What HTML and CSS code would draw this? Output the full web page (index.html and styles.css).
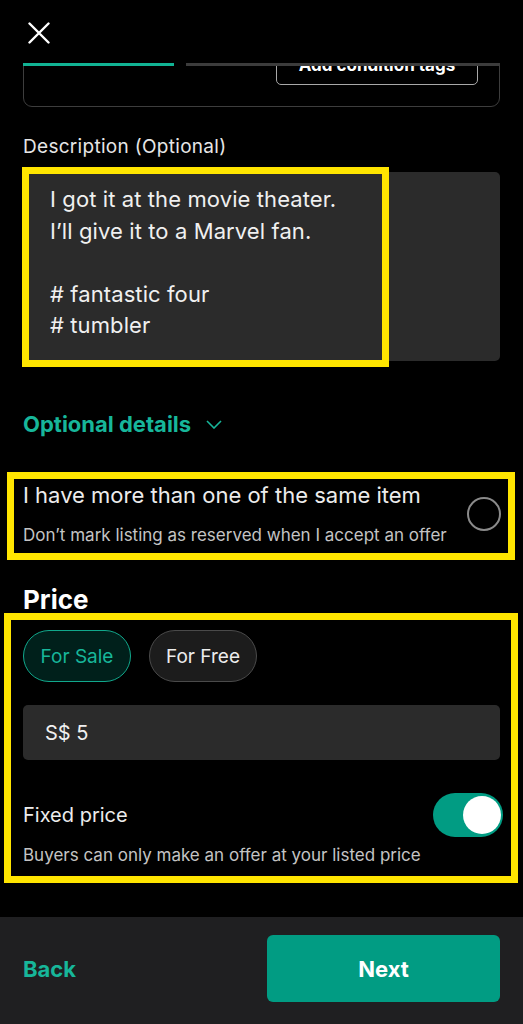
FILE: index.html
```html
<!DOCTYPE html>
<html lang="en">
    <head>
        <title>List an item - Price</title>
        <meta charset="utf-8" />
        <meta name="viewport" content="width=device-width, initial-scale=1">
        <link rel="stylesheet" href="styles.css">
    </head>

    <body>
        <div id="screen">
            <header class="topbar">
                <button class="close-btn" aria-label="Close">
                    <svg width="22" height="22" viewBox="0 0 22 22">
                        <path d="M1.5 1.5 L20.5 20.5 M20.5 1.5 L1.5 20.5" stroke="#ffffff" stroke-width="2.4" stroke-linecap="round" fill="none"/>
                    </svg>
                </button>
            </header>

            <div class="progress">
                <span class="step done"></span>
                <span class="step"></span>
            </div>

            <main class="content">
                <!-- condition card, scrolled mostly out of view -->
                <div class="condition-card">
                    <button class="outline-btn">Add condition tags</button>
                </div>

                <label class="field-label">Description (Optional)</label>
                <div class="textarea">
                    <p>I got it at the movie theater.<br>I’ll give it to a Marvel fan.<br><br># fantastic four<br># tumbler</p>
                    <div class="mark mark-desc"></div>
                </div>

                <div class="optional">
                    <span>Optional details</span>
                    <svg width="16" height="9" viewBox="0 0 16 9">
                        <path d="M1 1 L8 8 L15 1" stroke="#17b69a" stroke-width="1.6" fill="none"/>
                    </svg>
                </div>

                <div class="same-item marked-row">
                    <div class="same-text">
                        <div class="row-title">I have more than one of the same item</div>
                        <div class="row-sub">Don’t mark listing as reserved when I accept an offer</div>
                    </div>
                    <span class="radio"></span>
                </div>

                <h2 class="section-title">Price</h2>

                <div class="price-section marked-box">
                    <div class="pills">
                        <button class="pill active">For Sale</button>
                        <button class="pill">For Free</button>
                    </div>

                    <div class="price-input">S$ 5</div>

                    <div class="fixed-row">
                        <span class="row-title fixed-title">Fixed price</span>
                        <span class="toggle"><span class="knob"></span></span>
                    </div>
                    <div class="row-sub fixed-sub">Buyers can only make an offer at your listed price</div>
                </div>
            </main>

            <footer class="bottombar">
                <button class="back-btn">Back</button>
                <button class="next-btn">Next</button>
            </footer>
        </div>
    </body>
</html>
```

FILE: styles.css
```css
* {
    box-sizing: border-box;
}

html, body {
    margin: 0;
    padding: 0;
    background: #000000;
}

body {
    font-family: "Inter", "Noto Sans", sans-serif;
    color: #ececec;
}

button {
    font-family: inherit;
    cursor: pointer;
}

#screen {
    width: 523px;
    height: 1024px;
    display: flex;
    flex-direction: column;
    overflow: hidden;
}

.topbar {
    height: 63px;
    flex: none;
    padding: 22px 0 0 28px;
    position: relative;
    z-index: 2;
    background: #000000;
}

.close-btn {
    padding: 0;
    border: none;
    background: none;
    width: 22px;
    height: 22px;
    display: block;
}

.progress {
    height: 3px;
    flex: none;
    display: flex;
    gap: 12px;
    margin: 0 23px;
    position: relative;
    z-index: 2;
}

.step {
    flex: 1;
    background: #3c3c3c;
}

.step.done {
    flex: none;
    width: 151px;
    background: #11b394;
}

.content {
    flex: 1;
    overflow: hidden;
    padding: 0 23px;
    display: flex;
    flex-direction: column;
}

.condition-card {
    flex: none;
    margin-top: -39px;
    height: 80px;
    border: 1px solid #3d3d3d;
    border-radius: 9px;
    display: flex;
    justify-content: flex-end;
    align-items: flex-end;
    padding: 0 21px 21px 0;
}

.outline-btn {
    width: 202px;
    height: 40px;
    background: none;
    border: 1.5px solid #a8a8a8;
    border-radius: 5px;
    color: #ffffff;
    font-size: 17px;
    font-weight: 700;
    padding: 0;
}

.field-label {
    display: block;
    margin-top: 29px;
    font-size: 19px;
    letter-spacing: 0.3px;
    line-height: 22px;
    color: #e6e6e6;
}

.textarea {
    position: relative;
    margin-top: 14px;
    height: 189px;
    background: #2b2b2b;
    border-radius: 5px;
    padding: 12px 27px;
}

.textarea p {
    margin: 0;
    font-size: 22px;
    letter-spacing: 0.1px;
    line-height: 31.5px;
    color: #f0f0f0;
}

/* yellow annotation boxes */
.mark {
    position: absolute;
    border: 7px solid #ffe500;
    pointer-events: none;
}

.mark-desc {
    top: -5px;
    left: -1px;
    width: 367px;
    height: 200px;
}

.marked-row,
.marked-box {
    position: relative;
}

.marked-row::after,
.marked-box::after {
    content: "";
    position: absolute;
    border: 7px solid #ffe500;
    pointer-events: none;
}

.marked-row::after {
    top: -11px;
    bottom: -15px;
    left: -16px;
    right: -15px;
}

.marked-box::after {
    top: -17px;
    bottom: -18px;
    left: -19px;
    right: -18px;
}

.optional {
    margin-top: 51px;
    height: 24px;
    display: flex;
    align-items: center;
    gap: 15px;
    color: #17b69a;
    font-size: 22px;
    font-weight: 700;
}

.same-item {
    margin-top: 47px;
    display: flex;
    align-items: center;
    justify-content: space-between;
}

.row-title {
    font-size: 22px;
    line-height: 24px;
    color: #ececec;
}

.fixed-title {
    font-size: 20px;
}

.row-sub {
    font-size: 17px;
    line-height: 20px;
    color: #c4c4c4;
}

.same-text .row-sub {
    margin-top: 18px;
}

.radio {
    width: 34px;
    height: 34px;
    border: 2px solid #8a8a8a;
    border-radius: 50%;
    flex: none;
    margin-right: -1px;
}

.section-title {
    margin: 40px 0 0 0;
    font-size: 26px;
    line-height: 30px;
    font-weight: 700;
    color: #ffffff;
}

.price-section {
    margin-top: 15px;
}

.pills {
    display: flex;
    gap: 18px;
}

.pill {
    height: 52px;
    width: 108px;
    border-radius: 26px;
    border: 1.5px solid #4a4a4a;
    background: #1c1c1c;
    color: #ececec;
    font-size: 19px;
    padding: 0;
}

.pill.active {
    border-color: #11a88c;
    background: #00201b;
    color: #17b69a;
}

.price-input {
    margin-top: 23px;
    height: 55px;
    background: #2b2b2b;
    border-radius: 5px;
    padding: 0 22px;
    display: flex;
    align-items: center;
    font-size: 20px;
    color: #f0f0f0;
}

.fixed-row {
    margin-top: 33px;
    height: 44px;
    display: flex;
    align-items: center;
    justify-content: space-between;
}

.toggle {
    width: 70px;
    height: 44px;
    border-radius: 22px;
    background: #019c83;
    display: flex;
    align-items: center;
    justify-content: flex-end;
    padding-right: 2px;
    margin-right: -3px;
}

.knob {
    width: 38px;
    height: 38px;
    border-radius: 50%;
    background: #ffffff;
}

.fixed-sub {
    margin-top: 8px;
}

.bottombar {
    height: 107px;
    flex: none;
    background: #1f1f21;
    display: flex;
    align-items: center;
    justify-content: space-between;
    padding: 0 23px 4px 23px;
}

.back-btn {
    background: none;
    border: none;
    padding: 0;
    color: #17b69a;
    font-size: 22px;
    font-weight: 700;
}

.next-btn {
    width: 233px;
    height: 67px;
    border: none;
    border-radius: 6px;
    background: #019c83;
    color: #ffffff;
    font-size: 22px;
    font-weight: 700;
}
```
